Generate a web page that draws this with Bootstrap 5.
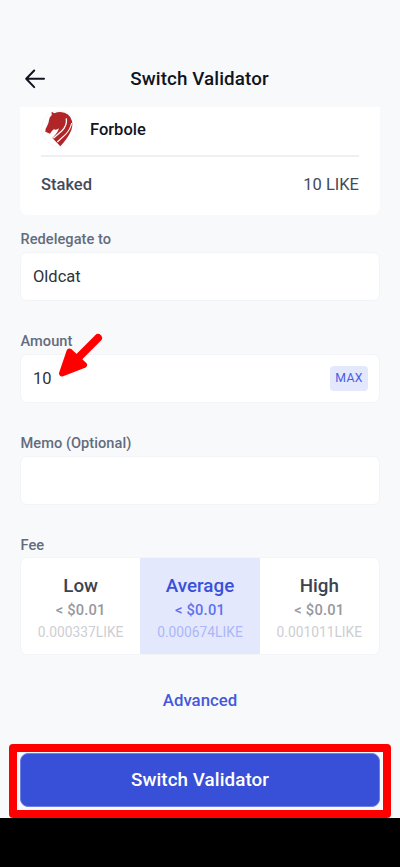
<!DOCTYPE html>
<html lang="en">
<head>
<meta charset="utf-8">
<meta name="viewport" content="width=device-width, initial-scale=1">
<title>Switch Validator</title>
<link href="https://cdn.jsdelivr.net/npm/bootstrap@5.3.0/dist/css/bootstrap.min.css" rel="stylesheet">
<style>
body{font-family:Roboto,"Liberation Sans",sans-serif;background:#f8f9fb;color:#0f1420;width:400px;height:867px;overflow:hidden;line-height:20px}
.page-col{width:360px}
.app-header{height:107px;padding:69px 24px 0}
.app-title{font-size:18.8px;font-weight:500;letter-spacing:.1px;line-height:21px;padding-left:1px}
.stake-card{height:107.500px;border-radius:0 0 8px 8px;padding:0 21px}
.name-row{height:50px;padding-bottom:2px;border-bottom:2px solid #eeeff2}
.validator-logo{width:50px;height:50px;margin:-5px 0 0 -6px}
.validator-name{font-size:16.5px;font-weight:500;margin:-1px 0 0 5px}
.stake-row{height:55px;font-size:16.5px;color:#434b5a}
.stake-label{font-weight:500}
.field-label{font-size:14.600px;font-weight:500;letter-spacing:.04px;color:#636c7d;height:23px;line-height:20px;margin:0;padding-left:.5px}
.field-box{height:49px;border:1px solid #f3f4f7;border-radius:7px;padding:1px 11px 0 12px;font-size:16.5px;color:#30333a}
.field-group{margin-bottom:30px}
.first-group{margin-top:14.500px}
.max-btn{width:38px;height:25px;margin-top:-2px;border-radius:4px;background:#e4e8fd;color:#4a5de0;font-size:12.3px;letter-spacing:.3px;line-height:25px;border:0;padding:0}
.fee-group{height:98px;margin-top:-1px;border:1px solid #f3f4f7;border-radius:7px}
.fee-option{padding-top:17px;color:#3b4350}
.fee-option.selected{background:#e4e8fd;color:#3b50da}
.fee-name{font-size:18.8px;font-weight:500;line-height:22px}
.fee-usd{font-size:14.700px;font-weight:500;letter-spacing:.2px;line-height:20px;margin-top:3px;color:#96989e}
.fee-coin{font-size:13.800px;line-height:20px;margin-top:2px;color:#cdced2}
.selected .fee-usd{color:#5f71ef}
.selected .fee-coin{color:#acb7f7}
.advanced-link{font-size:16.800px;font-weight:500;color:#4558dc;margin-top:35px;line-height:21px}
.highlight{margin:33px 9px 0;height:74px;border:8px solid #f00;border-radius:4px;padding:1px 3px 3px}
.submit-btn{height:54px;background:#384fd7;border:1px solid #6e7fe4;border-radius:8px;font-size:18.8px;font-weight:500;letter-spacing:.08px;padding:0;color:#fff}
.nav-area{background:#000}
.pointer{left:58px;top:332px;width:46px;height:47px}
</style>
<script src="https://cdn.jsdelivr.net/npm/bootstrap@5.3.0/dist/js/bootstrap.bundle.min.js"></script>
</head>
<body class="d-flex flex-column position-relative">
<header class="app-header d-flex align-items-start flex-shrink-0">
  <svg width="22" height="20" viewBox="0 0 22 20" fill="none" stroke="#0f1420" stroke-width="2" stroke-linecap="round" stroke-linejoin="round"><path d="M10.2 1.500 2.2 9.8l8 8.3M2.4 9.8h17.600"/></svg>
  <h1 class="app-title flex-fill text-center mb-0 me-4">Switch Validator</h1>
</header>
<main>
  <div class="page-col mx-auto">
    <section class="stake-card bg-white">
      <div class="name-row d-flex align-items-center">
        <svg class="validator-logo" viewBox="0 0 150 150"><circle cx="73" cy="77" r="53" fill="#fff" stroke="#f2f2f4" stroke-width="2"/><path fill="#b02528" d="M50 26l8 5Q66 27 76 27Q104 28 111 54Q115 72 105 90Q96 108 76 130L52 105Q68 90 72 76Q65 82 56 79L49 86L45 92L31 86Q31 77 36 70Q41 62 42 52Q43 41 50 37z"/><path fill="none" stroke="#fff" stroke-width="4" d="M94 46Q97 68 80 84L55 106"/><path fill="none" stroke="#fff" stroke-width="3.500" d="M110 60Q106 80 91 95L67 117"/></svg>
        <div class="validator-name">Forbole</div>
      </div>
      <div class="stake-row d-flex justify-content-between align-items-center"><span class="stake-label">Staked</span><span>10 LIKE</span></div>
    </section>
    <div class="field-group first-group">
      <div class="field-label">Redelegate to</div>
      <div class="field-box bg-white d-flex align-items-center">Oldcat</div>
    </div>
    <div class="field-group">
      <div class="field-label">Amount</div>
      <div class="field-box bg-white d-flex align-items-center justify-content-between">10<button class="max-btn">MAX</button></div>
    </div>
    <div class="field-group">
      <div class="field-label">Memo (Optional)</div>
      <div class="field-box bg-white"></div>
    </div>
    <div class="field-label">Fee</div>
    <div class="fee-group bg-white d-flex text-center overflow-hidden">
      <div class="fee-option col-4"><div class="fee-name">Low</div><div class="fee-usd">&lt; $0.01</div><div class="fee-coin">0.000337LIKE</div></div>
      <div class="fee-option selected col-4"><div class="fee-name">Average</div><div class="fee-usd">&lt; $0.01</div><div class="fee-coin">0.000674LIKE</div></div>
      <div class="fee-option col-4"><div class="fee-name">High</div><div class="fee-usd">&lt; $0.01</div><div class="fee-coin">0.001011LIKE</div></div>
    </div>
    <div class="advanced-link text-center">Advanced</div>
  </div>
  <div class="highlight"><button class="submit-btn btn w-100 d-block">Switch Validator</button></div>
</main>
<footer class="nav-area flex-fill"></footer>
<svg class="pointer position-absolute" viewBox="0 0 46 47" fill="#f00" stroke="#f00" stroke-linejoin="round" stroke-linecap="round"><path stroke-width="8" d="M40 6 20 26"/><path stroke-width="6" d="M4 41.500 11.500 19.500 26 33z"/></svg>
</body>
</html>
